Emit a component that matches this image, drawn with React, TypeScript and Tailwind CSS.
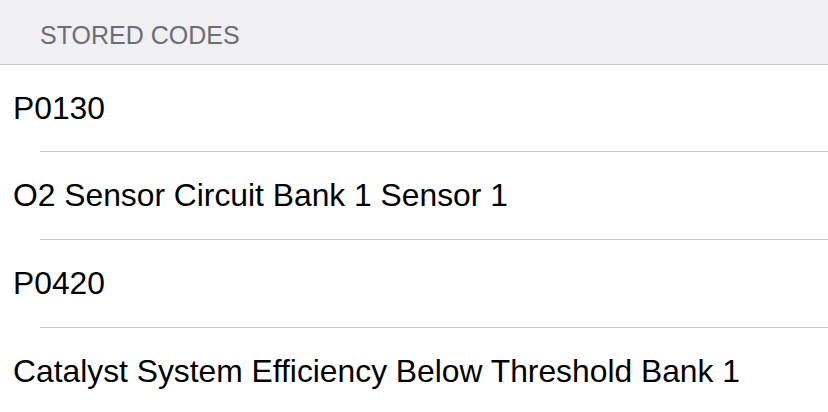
import React from 'react';

const codes = [
  'P0130',
  'O2 Sensor Circuit Bank 1 Sensor 1',
  'P0420',
  'Catalyst System Efficiency Below Threshold Bank 1',
];

export default function App() {
  return (
    <div className="w-[828px] h-[412px] overflow-hidden bg-white" style={{ fontFamily: '"Liberation Sans", Arial, sans-serif' }}>
      <div className="h-[65px] bg-[#efeff4] border-b border-[#c8c7cc] flex items-end pl-[40px] pb-[16px]">
        <span className="text-[25px] leading-none text-[#6d6d72] uppercase">Stored Codes</span>
      </div>
      {codes.map((code, i) => (
        <div key={i}>
          <div className={`${i === 0 ? 'h-[86px]' : 'h-[87px]'} flex items-center pl-[13px] pt-px`}>
            <span className="text-[31.8px] leading-none text-black">{code}</span>
          </div>
          {i < codes.length - 1 && <div className="ml-[40px] h-px bg-[#c8c7cc]" />}
        </div>
      ))}
    </div>
  );
}
